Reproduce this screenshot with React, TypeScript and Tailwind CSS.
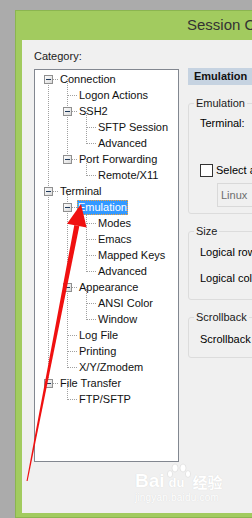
import React from "react";

type Row = { label: string; level: number; open?: boolean; selected?: boolean };

const rows: Row[] = [
  { label: "Connection", level: 0, open: true },
  { label: "Logon Actions", level: 1 },
  { label: "SSH2", level: 1, open: true },
  { label: "SFTP Session", level: 2 },
  { label: "Advanced", level: 2 },
  { label: "Port Forwarding", level: 1, open: true },
  { label: "Remote/X11", level: 2 },
  { label: "Terminal", level: 0, open: true },
  { label: "Emulation", level: 1, open: true, selected: true },
  { label: "Modes", level: 2 },
  { label: "Emacs", level: 2 },
  { label: "Mapped Keys", level: 2 },
  { label: "Advanced", level: 2 },
  { label: "Appearance", level: 1, open: true },
  { label: "ANSI Color", level: 2 },
  { label: "Window", level: 2 },
  { label: "Log File", level: 1 },
  { label: "Printing", level: 1 },
  { label: "X/Y/Zmodem", level: 1 },
  { label: "File Transfer", level: 0, open: true },
  { label: "FTP/SFTP", level: 1 },
];

const indent = ["pl-[23px]", "pl-[42px]", "pl-[61px]"];

// vertical connector runs: [level, fromRow, toRow]
const runs: [number, number, number][] = [
  [0, 0, 19],
  [1, 0, 5],
  [1, 7, 18],
  [1, 19, 20],
  [2, 2, 4],
  [2, 5, 6],
  [2, 8, 12],
  [2, 13, 15],
];

const lx = (l: number) => 13 + 19 * l + 0.5;
const cy = (i: number) => 9 + 16 * i + 0.5;

function TreeLines() {
  return (
    <svg className="absolute left-0 top-0" width="143" height="391" shapeRendering="crispEdges">
      <defs>
        <linearGradient id="bx" x1="0" y1="0" x2="1" y2="1">
          <stop offset="0" stopColor="#ffffff" />
          <stop offset="1" stopColor="#d8d8d8" />
        </linearGradient>
      </defs>
      <g stroke="#a0a0a0" strokeDasharray="1 1">
        {runs.map(([l, a, b], k) => (
          <line key={k} x1={lx(l)} x2={lx(l)} y1={cy(a) - 0.5} y2={cy(b) + 0.5} />
        ))}
        {rows.map((r, i) => (
          <line key={i} x1={lx(r.level)} x2={23 + 19 * r.level} y1={cy(i)} y2={cy(i)} />
        ))}
      </g>
      {rows.map((r, i) =>
        r.open ? (
          <g key={i}>
            <rect x={lx(r.level) - 4} y={cy(i) - 4} width="8" height="8" fill="url(#bx)" stroke="#8f8f8f" />
            <line x1={lx(r.level) - 2.5} x2={lx(r.level) + 2.5} y1={cy(i)} y2={cy(i)} stroke="#1e395b" />
          </g>
        ) : null
      )}
    </svg>
  );
}

function Group({ title, className, children }: { title: string; className: string; children: React.ReactNode }) {
  return (
    <fieldset className={`border border-[#dcdcdc] rounded-[3px] ${className}`}>
      <legend className="ml-[5px] px-[2px] leading-[13px] text-[#1a1a1a]">{title}</legend>
      <div className="pl-[11px]">{children}</div>
    </fieldset>
  );
}

export default function App() {
  return (
    <div
      className="relative w-[252px] h-[518px] overflow-hidden bg-[#ababab] pl-[15px] pt-[10px] text-[11px] text-black"
      style={{ fontFamily: '"Liberation Sans", Arial, sans-serif' }}
    >
      <div className="w-[300px] h-[508px] bg-[#a2cb5f] border border-[#8bb550] flex flex-col">
        {/* Title bar */}
        <div className="h-[29px] shrink-0 flex items-center pl-[171px]">
          <span className="text-[15px] text-[#333] whitespace-nowrap">Session Options</span>
        </div>

        {/* Content */}
        <div className="relative flex-1 ml-[6px] mb-[4px] bg-[#f0f0f0] flex">
          {/* Left column */}
          <div className="pl-[12px] pt-[10px] shrink-0">
            <div className="leading-[13px] text-[#1a1a1a]">Category:</div>
            <div className="relative mt-[6px] w-[145px] h-[393px] border border-[#828790] bg-white pt-[1px]">
              <TreeLines />
              {rows.map((r, i) => (
                <div key={i} className={`relative h-[16px] flex items-center ${indent[r.level]}`}>
                  <span
                    className={
                      r.selected
                        ? "h-[15px] px-[1px] flex items-center bg-[#3399ff] text-white outline outline-1 outline-dotted outline-[#f3a23a] -outline-offset-1"
                        : "px-[2px] leading-[13px] whitespace-nowrap text-[#111]"
                    }
                  >
                    {r.label}
                  </span>
                </div>
              ))}
            </div>
          </div>

          {/* Right column */}
          <div className="ml-[9px] pt-[28px] w-[120px] shrink-0">
            <div className="h-[17px] bg-[#c6d3e1] flex items-center pl-[6px] font-bold text-[#111]">
              Emulation
            </div>

            <Group title="Emulation" className="mt-[12px] h-[117px]">
              <div className="mt-[7px] leading-[13px]">Terminal:</div>
              <div className="mt-[34px] flex items-center gap-[3px] whitespace-nowrap">
                <span className="w-[13px] h-[13px] border border-[#333] bg-white shrink-0" />
                <span className="leading-[13px]">Select alternate keyboard emulation</span>
              </div>
              <div className="mt-[6px] ml-[17px] h-[24px] border border-[#d9d9d9] pl-[3px] flex items-center text-[#6d6d6d]">
                Linux
              </div>
            </Group>

            <Group title="Size" className="mt-[11px] h-[75px]">
              <div className="mt-[8px] leading-[13px] whitespace-nowrap">Logical rows:</div>
              <div className="mt-[13px] leading-[13px] whitespace-nowrap">Logical columns:</div>
            </Group>

            <Group title="Scrollback" className="mt-[11px] h-[47px]">
              <div className="mt-[9px] leading-[13px] whitespace-nowrap">Scrollback buffer:</div>
            </Group>
          </div>

          {/* Watermark */}
          <div className="absolute left-[113px] top-[423px] flex flex-col items-start text-white [text-shadow:0_0_1px_#d2d2d2] pointer-events-none">
            <div className="flex items-end gap-[1px]">
              <span className="text-[19px] font-bold leading-[19px]">Bai</span>
              <span className="relative w-[26px] h-[27px]">
                <svg width="26" height="20" viewBox="0 0 26 20" className="absolute left-0 top-0">
                  <g fill="#ffffff" stroke="#d6d6d6" strokeWidth="0.6">
                    <ellipse cx="9" cy="5" rx="3" ry="4" />
                    <ellipse cx="17" cy="5" rx="3" ry="4" />
                    <ellipse cx="4" cy="11" rx="2.6" ry="3.4" />
                    <ellipse cx="22" cy="11" rx="2.6" ry="3.4" />
                  </g>
                </svg>
                <span className="absolute left-[3px] bottom-0 text-[13px] font-bold leading-[14px]">du</span>
              </span>
              <span
                className="text-[15px] font-bold leading-[17px]"
                style={{ fontFamily: '"Noto Sans CJK SC", sans-serif' }}
              >
                经验
              </span>
            </div>
            <div className="mt-[3px] text-[10px] leading-[10px] tracking-[0.2px]">jingyan.baidu.com</div>
          </div>
        </div>
      </div>

      {/* Red arrow annotation */}
      <svg className="absolute left-0 top-0 pointer-events-none" width="252" height="518">
        <polygon points="26.5,481 27.6,481 79.3,226.2 74.3,225.1" fill="#f01010" />
        <polygon points="81,204 86.6,227.5 67,223.7" fill="#f01010" />
      </svg>
    </div>
  );
}
